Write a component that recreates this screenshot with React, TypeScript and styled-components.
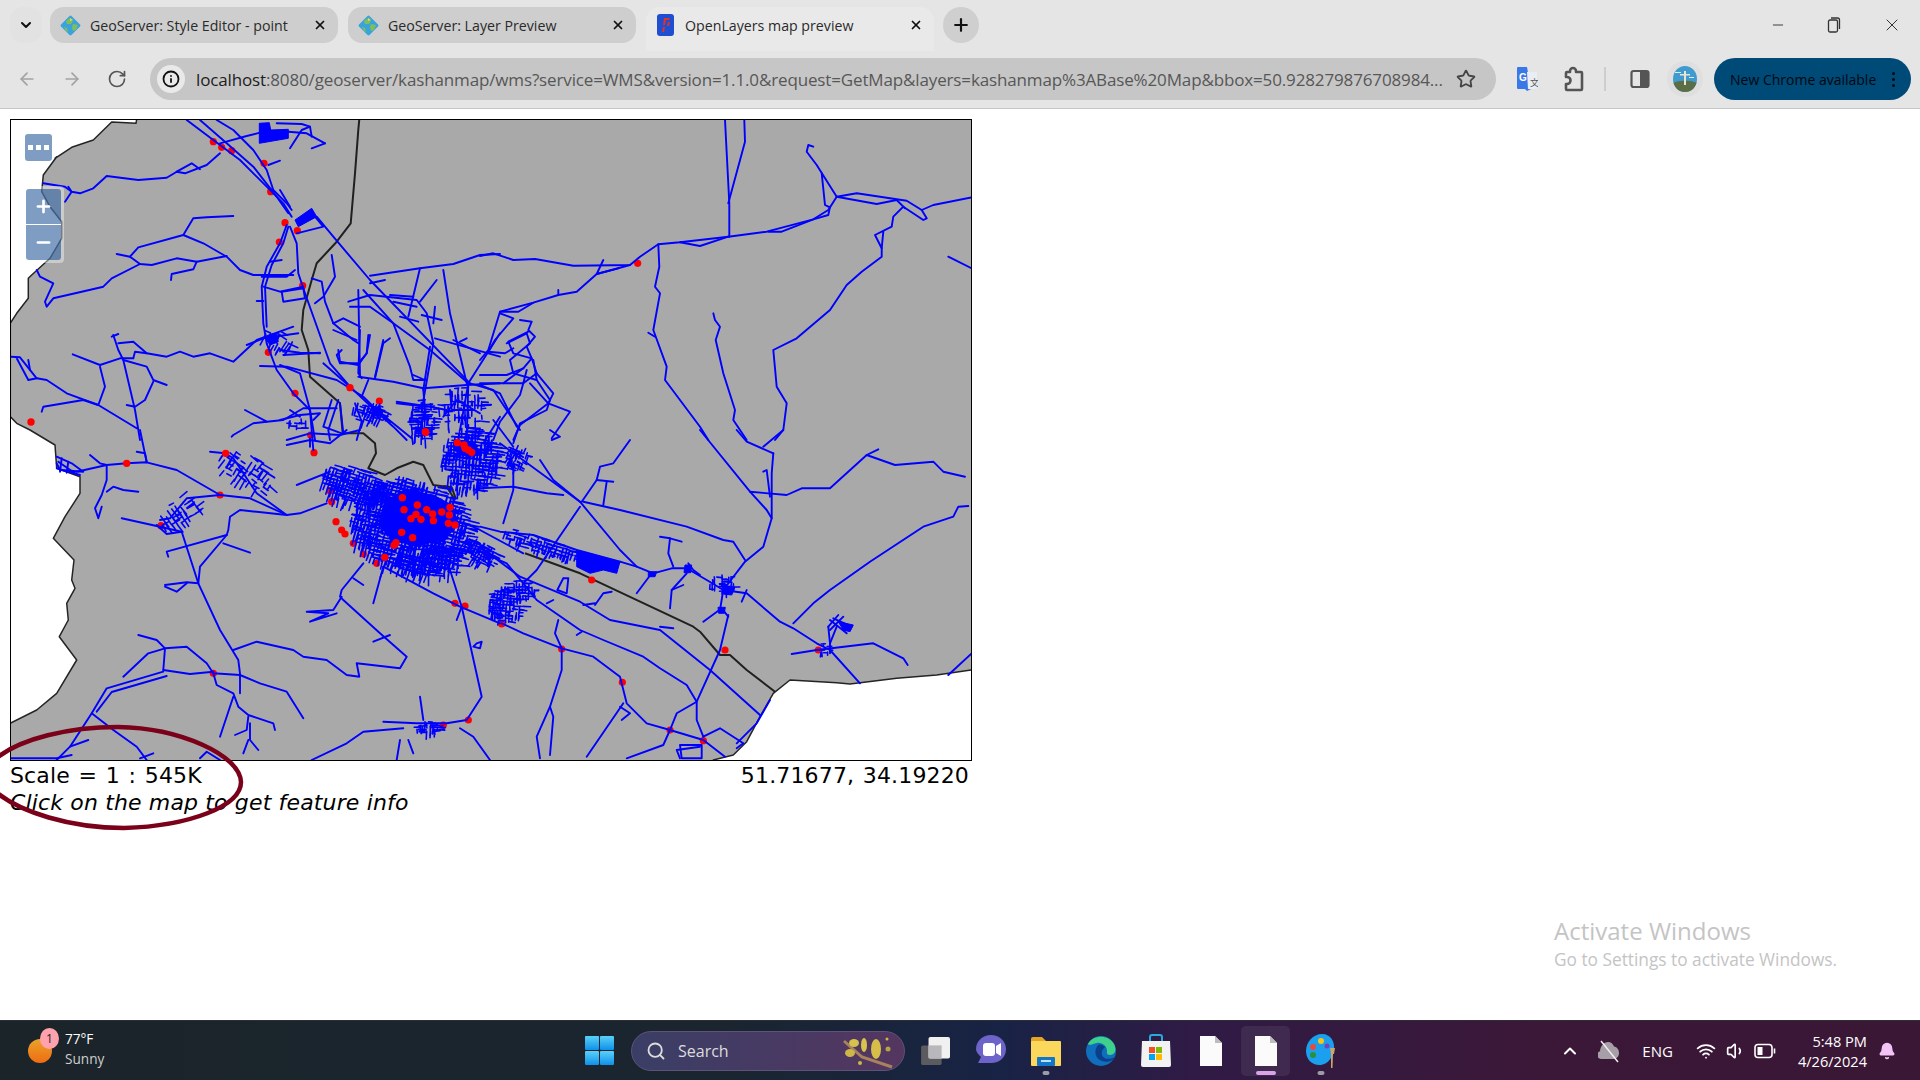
import React from 'react';
import styled, { createGlobalStyle } from 'styled-components';
import { ArrowLeft, ArrowRight, Bell, ChevronDown, ChevronUp, Info, Minus, Plus, RotateCw, Search, Star, Volume1, Wifi, X } from 'lucide-react';

const UI_FONT = `"Open Sans", "Noto Sans", sans-serif`;

const GlobalStyle = createGlobalStyle`
   html, body {
      margin: 0;
      padding: 0;
      width: 1920px;
      height: 1080px;
      overflow: hidden;
      background: #fff;
   }
   * { box-sizing: border-box; }
`;

/* map data: points are read off zoomed crops, so each list names the crop it came from */
type Crop = 'A' | 'B' | 'C' | 'D' | 'E' | 'F' | 'Z';
const ORIGIN: Record<Crop, [number, number]> = {
   A: [0, 110],
   B: [480, 110],
   C: [0, 430],
   D: [480, 430],
   E: [310, 400],
   F: [280, 330],
   Z: [10, 125],
};

const toScreen = (crop: Crop, pts: string) =>
   pts
      .trim()
      .split(/\s+/)
      .map((p) => {
         const [x, y] = p.split(',').map(Number);
         return `${(ORIGIN[crop][0] + x / 3).toFixed(1)},${(ORIGIN[crop][1] + y / 3).toFixed(1)}`;
      })
      .join(' ');

const LAND = [
   toScreen('A', '410,28 408,40 335,36 280,90 215,112 165,145'),
   toScreen('Z', '140,95 100,150 95,200 120,245 155,290 155,340 120,400 65,450'),
   toScreen('A', '85,505 85,565 50,610 31,640 31,920 50,940 90,960'),
   toScreen('C', '165,45 170,115 240,140 240,190 195,260 160,325 222,390 215,450 225,475 200,520 205,570 178,620 230,690 170,790 110,840 20,885 20,1000'),
   toScreen('D', '700,1000 700,990 760,975 800,935 840,860 880,790 930,750 1070,758 1110,762 1250,745 1370,735 1490,718'),
   toScreen('B', '1490,10'),
   toScreen('A', '410,10'),
].join(' ');

const BORDER_LINES: [Crop, string][] = [
   ['A', '1078,28 1075,60 1065,190 1052,340 1010,395 950,460 935,510 910,600 905,660 925,720 930,800 1020,880 1028,970'],
   ['C', '1028,10 1090,10 1125,40 1128,70 1105,115 1155,135 1190,115 1240,95 1270,105 1300,165 1340,170 1365,210'],
   ['E', '400,258 425,262 437,295'],
   ['D', '135,370 300,430 640,590 660,605 720,675 750,675 800,720 885,785'],
];

const ROADS: [Crop, string][] = [
   ['A', '560,30 640,90 720,150 800,230 850,280 875,320'],
   ['A', '650,30 700,60 760,120 800,180 820,240 860,280 875,300'],
   ['A', '600,30 680,100 760,170 830,260 865,310'],
   ['A', '660,100 740,78 780,68'],
   ['A', '865,65 920,70 975,100'],
   ['A', '870,115 905,60 930,50 935,80'],
   ['A', '830,40 905,42 930,50'],
   ['A', '935,115 975,100'],
   ['A', '805,165 840,152'],
   ['A', '660,130 620,165 555,190 530,185 500,203 415,210 320,198 280,235 240,250 215,245 195,230 130,220'],
   ['A', '530,185 575,160 600,178'],
   ['A', '195,275 215,245 205,230'],
   ['A', '840,240 870,290'],
   ['A', '700,318 620,322 580,325 550,375 415,412 390,440 350,432'],
   ['A', '550,375 610,400 680,440 720,480 760,495 880,495'],
   ['A', '680,438 590,455 530,445 455,465 420,462 390,440'],
   ['A', '420,462 335,505 310,530 245,545 160,565 140,590 135,575 160,520 120,500 110,480'],
   ['A', '590,455 580,478 515,492 513,510'],
   ['A', '860,345 840,400 800,470 785,530 790,640 800,700 830,780 880,850 930,900 945,990'],
   ['A', '865,350 850,400 815,465 795,530 800,650'],
   ['A', '870,350 890,400 895,490 915,550 990,760 1050,830'],
   ['A', '785,500 860,500 885,480'],
   ['A', '845,450 810,455'],
   ['A', '790,530 840,545 910,530'],
   ['A', '845,545 910,535 915,565 850,575 845,545'],
   ['A', '770,573 790,573'],
   ['A', '890,370 970,350 945,320'],
   ['A', '950,320 1000,380 1110,510 1410,820'],
   ['A', '1330,480 1350,610 1400,820'],
   ['A', '1260,475 1225,620'],
   ['A', '1310,510 1260,575'],
   ['A', '1110,497 1260,475 1360,462 1440,435 1500,432'],
   ['A', '1110,520 1155,510'],
   ['A', '995,435 1005,500 970,560 945,580'],
   ['A', '935,505 965,515 975,575 1000,640 1060,690 1075,700'],
   ['A', '1000,640 1030,625 1080,650'],
   ['A', '1105,675 1100,730 1075,765 1020,755 1015,720'],
   ['A', '1075,540 1080,800'],
   ['A', '1150,690 1125,800'],
   ['A', '1075,800 1180,815 1270,835 1400,825 1500,820'],
   ['A', '1045,575 1110,555 1250,570 1280,610 1300,700 1265,900'],
   ['A', '1050,590 1110,590 1180,640 1290,720 1405,820'],
   ['A', '1090,540 1180,640 1230,770 1240,810 1275,810'],
   ['A', '1170,555 1240,560'],
   ['A', '1180,575 1250,590'],
   ['A', '1200,620 1255,635'],
   ['A', '1265,615 1325,630'],
   ['A', '1305,590 1300,640'],
   ['A', '1305,685 1500,740'],
   ['A', '1405,820 1500,670'],
   ['A', '1405,820 1400,990'],
   ['A', '1380,695 1400,685'],
   ['A', '340,675 355,720 370,750 405,900 420,990'],
   ['A', '335,680 355,672'],
   ['A', '355,700 400,695 440,730 500,740 540,725 580,740 630,730 700,755 770,690 880,650'],
   ['A', '218,733 300,765 360,745 400,745'],
   ['A', '400,745 405,725 440,730'],
   ['A', '300,770 315,830 295,885 250,870 130,890 125,905'],
   ['A', '370,750 440,770 460,810 500,825'],
   ['A', '460,815 435,870 405,890 380,885'],
   ['A', '33,740 60,742 110,805 85,810 50,745'],
   ['A', '110,805 140,810 200,850 295,885 410,955'],
   ['A', '85,750 90,780'],
   ['A', '780,768 860,770 1010,810 1090,860 1130,900 1235,985'],
   ['A', '970,760 1050,830 1130,905 1180,950 1220,990'],
   ['A', '735,900 800,935 850,930 910,895 1010,895'],
   ['A', '800,935 760,940 700,975 695,980'],
   ['A', '740,705 790,685 895,670'],
   ['A', '850,735 960,728'],
   ['A', '1105,810 1085,860'],
   ['A', '1015,870 985,960 990,990'],
   ['A', '1190,880 1280,890'],
   ['A', '1065,880 1085,935 1070,990'],
   ['F', '160,0 230,30'],
   ['F', '240,0 235,130 245,145'],
   ['F', '270,15 260,70 235,100 180,100 170,75 185,60'],
   ['F', '330,25 310,40 285,145'],
   ['F', '120,70 60,68 0,60'],
   ['F', '0,105 60,130 90,240 100,360'],
   ['F', '400,135 435,150'],
   ['F', '430,180 435,240 420,300'],
   ['F', '350,215 450,230 500,240'],
   ['F', '450,50 430,180'],
   ['F', '565,160 540,300'],
   ['F', '570,160 640,180 720,300'],
   ['F', '760,90 770,150 810,210 800,240 720,280 700,340'],
   ['F', '680,40 740,10 750,40 690,90 700,130 770,150'],
   ['F', '0,270 60,255 120,250 100,270'],
   ['F', '20,330 90,310 180,315 240,300'],
   ['F', '30,240 60,260'],
   ['F', '155,210 130,290 185,310'],
   ['F', '180,220 190,310'],
   ['F', '520,30 600,70'],
   ['F', '510,180 515,240 580,240'],
   ['F', '490,260 530,210 600,250'],
   ['F', '660,260 610,340'],
   ['F', '640,270 700,350'],
   ['B', '735,30 748,280 748,380'],
   ['B', '793,30 795,95 745,280'],
   ['B', '0,438 40,430 100,450 165,447 280,467 450,465 480,440 535,403 600,397 745,380 860,365 1000,328 1045,300 1070,260 1130,250 1280,272 1325,300 1340,325 1330,330 1270,290'],
   ['B', '1325,300 1360,285 1475,262'],
   ['B', '1070,260 1010,165 980,125 985,105 1000,110'],
   ['B', '1025,190 1035,285 1045,290'],
   ['B', '1070,260 1190,282 1250,270 1275,295'],
   ['B', '1270,290 1240,320 1235,350 1185,375 1205,415 1205,440 1145,485 1100,525 1050,600 950,685 880,720 890,830 920,880 910,960 885,990'],
   ['B', '1210,365 1205,415'],
   ['B', '865,365 905,365 1000,328 1045,315 1050,290'],
   ['B', '600,397 660,408 745,380'],
   ['B', '1405,440 1475,475'],
   ['B', '535,403 538,470 525,530 540,550 520,660 560,770 555,810 660,950 685,990'],
   ['B', '505,668 525,680'],
   ['B', '700,610 705,630 720,650 707,690 730,790 765,900 760,930 800,990'],
   ['B', '450,465 350,492 290,545 235,555 160,578 60,605 25,720 0,750'],
   ['B', '370,450 350,492 415,475'],
   ['B', '235,540 235,555'],
   ['B', '160,578 115,605 60,605'],
   ['B', '60,610 100,625 45,690 25,725'],
   ['B', '120,630 155,635 145,660 165,680 140,710 155,745 170,790 220,850 205,880 270,905 215,985'],
   ['B', '145,665 85,695 100,730 155,745 130,775 70,820'],
   ['B', '170,790 130,820 0,820'],
   ['B', '140,780 130,820 120,855 60,935 40,990'],
   ['B', '0,795 80,795 130,775'],
   ['B', '150,820 205,880 120,945 100,990'],
   ['B', '25,725 75,730 100,715'],
   ['B', '0,825 60,850 110,950'],
   ['C', '170,80 215,100 250,125 180,120 170,100'],
   ['C', '175,95 225,130'],
   ['C', '170,115 240,135'],
   ['C', '185,85 180,125'],
   ['C', '205,95 200,128'],
   ['C', '380,100 320,105 230,125'],
   ['C', '270,75 300,100 320,105 320,150 305,195 285,235 295,265 305,230'],
   ['C', '320,185 340,170 370,180 415,185'],
   ['C', '380,100 440,97 530,120 660,195 750,205 860,255 900,250 980,220'],
   ['C', '410,65 435,70 440,95'],
   ['C', '420,0 440,97'],
   ['C', '860,255 770,190 700,85 675,70 630,65'],
   ['C', '660,195 560,205 510,265 480,270'],
   ['C', '365,265 480,290 545,305 595,460 660,600 715,690 720,730 720,790'],
   ['C', '680,315 500,365 505,380'],
   ['C', '680,315 600,410 595,460'],
   ['C', '670,340 750,368'],
   ['C', '860,255 720,240 690,260 685,300 680,315'],
   ['C', '495,465 560,457 595,460'],
   ['C', '495,470 530,485 560,460'],
   ['C', '470,285 500,312 545,305'],
   ['C', '700,660 770,635 880,660 910,680 980,690 1040,735 1078,740 1070,700 1200,715 1220,680 1140,610 1030,510 1020,500 1025,480 1090,400'],
   ['C', '1025,500 1000,540 920,545 985,550 930,575 1010,550'],
   ['C', '1120,635 1170,615'],
   ['C', '1060,445 1090,465'],
   ['C', '1150,410 1120,520'],
   ['C', '1150,410 1300,490 1380,530 1500,580'],
   ['C', '1350,420 1385,530 1445,800 1400,870 1340,880 1250,880 1150,875'],
   ['C', '1385,530 1370,570'],
   ['C', '1260,800 1270,870'],
   ['C', '1210,895 1090,905 1040,940 935,990'],
   ['C', '1380,895 1420,920 1470,990'],
   ['C', '1200,930 1190,990'],
   ['C', '1225,930 1240,970'],
   ['C', '1430,640 1445,635 1440,655 1420,650 1430,640'],
   ['C', '415,615 470,630 495,655 490,720'],
   ['C', '370,740 445,670 495,655 560,650 620,700 640,730 720,735 780,760 860,785 910,865'],
   ['C', '490,720 570,732 640,725'],
   ['C', '490,725 320,775 275,850 210,950 170,990'],
   ['C', '500,738 335,786 290,845'],
   ['C', '275,850 340,900 410,950 440,990'],
   ['C', '640,730 650,765 700,790 715,830 745,855 820,880 825,900'],
   ['C', '700,800 660,920'],
   ['C', '745,860 740,900 705,915'],
   ['C', '750,880 750,930 775,960'],
   ['C', '745,930 730,970'],
   ['C', '30,985 100,985 170,985 215,975'],
   ['C', '210,950 265,930'],
   ['C', '420,985 460,970'],
   ['C', '600,985 620,965 660,990'],
   ['C', '890,165 990,125'],
   ['C', '860,45 930,30 990,40 1040,0'],
   ['C', '930,25 930,50'],
   ['D', '0,290 60,305 160,315 290,360 420,395'],
   ['D', '0,300 130,370'],
   ['D', '420,395 470,410 520,430 575,415 620,415 680,450 730,480 800,490 900,575 940,595 1010,640 1050,660 1140,760'],
   ['D', '730,480 795,395 850,350 875,265 860,240 810,185 660,0'],
   ['D', '810,185 920,195 965,175 1050,175 1160,75 1195,58'],
   ['D', '1160,75 1245,105 1360,95 1390,125 1455,140'],
   ['D', '880,70 875,130 875,265'],
   ['D', '850,125 860,120 870,200'],
   ['D', '770,0 800,35 880,70'],
   ['D', '850,50 910,0'],
   ['D', '940,580 1000,520 1050,480 1170,395 1330,290 1420,260 1435,230 1465,228'],
   ['D', '935,672 1010,660 1180,640 1270,685 1283,705'],
   ['D', '1045,590 1050,640 1050,670'],
   ['D', '1070,590 1050,640'],
   ['D', '1405,735 1475,670'],
   ['D', '310,215 420,240 620,290 730,330 760,335 795,390'],
   ['D', '300,230 170,420 130,460'],
   ['D', '450,30 400,100 360,110 350,150 305,215'],
   ['D', '350,150 400,155'],
   ['D', '380,155 370,225'],
   ['D', '60,40 300,215 420,360 470,410'],
   ['D', '180,90 220,150 300,215'],
   ['D', '100,170 200,190 250,195'],
   ['D', '100,100 100,180 70,280'],
   ['D', '0,175 100,170'],
   ['D', '0,350 120,440 300,515 390,570 540,600 690,720 840,855'],
   ['D', '540,590 580,595'],
   ['D', '310,525 345,520'],
   ['D', '345,525 370,490 395,485'],
   ['D', '65,580 130,610 245,655 340,680 420,740 440,820 500,880 570,900 670,930 735,980'],
   ['D', '245,655 245,720 210,830 170,920 180,985'],
   ['D', '210,830 220,860 210,975'],
   ['D', '430,820 320,980'],
   ['D', '420,830 450,850 425,870'],
   ['D', '130,460 170,510 300,600 370,630 490,680 540,715 620,765 650,815 590,850 570,900 550,945 440,985'],
   ['D', '235,570 225,610 245,655'],
   ['D', '290,615 305,605'],
   ['D', '200,520 220,510'],
   ['D', '745,555 720,660 650,815 650,870 670,920'],
   ['D', '670,575 725,535 745,560'],
   ['D', '730,480 720,540'],
   ['D', '670,920 720,895 790,940 770,955'],
   ['D', '770,940 830,880 870,810'],
   ['D', '660,950 590,960 600,985'],
   ['D', '600,945 665,945 665,985 605,985 600,945'],
   ['D', '540,320 570,325 605,335'],
   ['D', '570,325 565,370 580,410'],
   ['D', '515,430 470,490'],
   ['D', '620,430 575,480 570,535'],
   ['D', '575,480 610,465'],
   ['D', '625,400 640,420 660,435'],
   ['D', '250,445 232,480 260,490 265,445 250,445'],
   ['D', '800,480 785,515'],
   ['D', '0,365 80,400 130,460'],
   ['D', '210,0 240,20 215,30'],
   ['D', '1050,600 1090,560'],
   ['D', '1050,570 1100,610'],
   ['D', '1060,565 1115,590'],
   ['D', '1045,590 1075,555'],
];

const BLOBS: [Crop, string][] = [
   ['A', '778,40 808,38 812,60 865,58 865,85 778,100'],
   ['A', '885,330 935,295 950,320 895,350'],
   ['A', '795,682 830,672 835,695 810,705'],
   ['A', '1115,895 1140,888 1145,910 1120,918'],
   ['D', '290,360 420,395 410,430 370,420 330,430 290,410'],
   ['D', '505,425 530,425 525,440 505,440'],
   ['D', '615,405 635,405 632,428 612,428'],
   ['D', '725,465 765,472 755,495 730,492'],
   ['D', '714,532 736,532 733,550 716,550'],
   ['D', '1075,575 1120,585 1110,605 1090,600'],
   ['E', '225,300 290,272 370,285 425,315 445,370 405,420 330,432 255,425 205,375'],
   ['E', '440,120 490,125 515,165 470,170 430,150'],
];

// small street grids: a seeded generator keeps the picture the same on every run
const mulberry = (seed: number) => () => {
   seed = (seed + 0x6d2b79f5) | 0;
   let t = Math.imul(seed ^ (seed >>> 15), 1 | seed);
   t = (t + Math.imul(t ^ (t >>> 7), 61 | t)) ^ t;
   return ((t ^ (t >>> 14)) >>> 0) / 4294967296;
};

type Cluster = { crop: Crop; cx: number; cy: number; rx: number; ry: number; n: number; len: number; tilt: number; step?: number };

const CLUSTERS: Cluster[] = [
   { crop: 'E', cx: 300, cy: 375, rx: 178, ry: 140, n: 1100, len: 30, tilt: 0.25, step: 11 },
   { crop: 'E', cx: 360, cy: 475, rx: 95, ry: 55, n: 170, len: 24, tilt: 0.1, step: 12 },
   { crop: 'E', cx: 130, cy: 255, rx: 100, ry: 52, n: 300, len: 26, tilt: 0.3, step: 10 },
   { crop: 'E', cx: 480, cy: 175, rx: 85, ry: 95, n: 420, len: 24, tilt: 0.1, step: 10 },
   { crop: 'E', cx: 335, cy: 65, rx: 42, ry: 52, n: 70, len: 22, tilt: 0, step: 10 },
   { crop: 'E', cx: 200, cy: 35, rx: 35, ry: 25, n: 50, len: 18, tilt: 0.4, step: 9 },
   { crop: 'E', cx: 510, cy: 455, rx: 55, ry: 32, n: 110, len: 18, tilt: 0.5, step: 9 },
   { crop: 'E', cx: 612, cy: 170, rx: 22, ry: 30, n: 24, len: 14, tilt: 0.5, step: 7 },
   { crop: 'E', cx: 620, cy: 570, rx: 55, ry: 25, n: 70, len: 16, tilt: 0, step: 9 },
   { crop: 'C', cx: 740, cy: 120, rx: 90, ry: 48, n: 70, len: 22, tilt: 0.6, step: 14 },
   { crop: 'C', cx: 540, cy: 250, rx: 65, ry: 38, n: 50, len: 20, tilt: -0.6, step: 13 },
   { crop: 'C', cx: 1485, cy: 525, rx: 20, ry: 38, n: 30, len: 14, tilt: 0, step: 8 },
   { crop: 'C', cx: 1280, cy: 893, rx: 45, ry: 18, n: 40, len: 16, tilt: 0, step: 6 },
   { crop: 'D', cx: 80, cy: 525, rx: 52, ry: 52, n: 120, len: 16, tilt: 0.1, step: 10 },
   { crop: 'D', cx: 180, cy: 345, rx: 115, ry: 24, n: 140, len: 16, tilt: 0.3, step: 10 },
   { crop: 'D', cx: 725, cy: 462, rx: 38, ry: 30, n: 40, len: 14, tilt: 0, step: 7 },
   { crop: 'D', cx: 110, cy: 80, rx: 35, ry: 42, n: 40, len: 14, tilt: 0.4, step: 8 },
   { crop: 'D', cx: 1030, cy: 655, rx: 20, ry: 14, n: 10, len: 10, tilt: 0, step: 6 },
   { crop: 'A', cx: 830, cy: 690, rx: 55, ry: 30, n: 20, len: 26, tilt: 0.5, step: 9 },
   { crop: 'A', cx: 1265, cy: 925, rx: 40, ry: 60, n: 45, len: 20, tilt: 0, step: 9 },
   { crop: 'A', cx: 1385, cy: 895, rx: 70, ry: 65, n: 75, len: 22, tilt: 0, step: 10 },
   { crop: 'A', cx: 1090, cy: 910, rx: 40, ry: 30, n: 26, len: 16, tilt: 0.3, step: 8 },
   { crop: 'A', cx: 890, cy: 940, rx: 28, ry: 20, n: 14, len: 14, tilt: 0, step: 7 },
];

const clusterPath = ({ crop, cx, cy, rx, ry, n, len, tilt, step = 12 }: Cluster, seed: number) => {
   const rnd = mulberry(seed + 11);
   const [ox, oy] = ORIGIN[crop];
   let d = '';
   for (let i = 0; i < n; i += 1) {
      const a = rnd() * Math.PI * 2;
      const r = Math.sqrt(rnd());
      const gx = Math.round((r * Math.cos(a) * rx) / step) * step;
      const gy = Math.round((r * Math.sin(a) * ry) / step) * step;
      const l = len * (0.5 + rnd());
      const ang = tilt + (rnd() > 0.5 ? 0 : Math.PI / 2) + (rnd() - 0.5) * 0.25;
      const x1 = cx + gx * Math.cos(tilt) - gy * Math.sin(tilt) + (rnd() - 0.5) * 3;
      const y1 = cy + gx * Math.sin(tilt) + gy * Math.cos(tilt) + (rnd() - 0.5) * 3;
      const x2 = x1 + l * Math.cos(ang);
      const y2 = y1 + l * Math.sin(ang);
      d += `M${(ox + x1 / 3).toFixed(1)} ${(oy + y1 / 3).toFixed(1)}L${(ox + x2 / 3).toFixed(1)} ${(oy + y2 / 3).toFixed(1)}`;
   }
   return d;
};

const DOTS_UNDER: [Crop, number, number][] = [
   ['A', 640, 95], ['A', 665, 112], ['A', 695, 122], ['A', 792, 160], ['A', 812, 245], ['A', 855, 338], ['A', 892, 362],
   ['A', 838, 396], ['A', 908, 527], ['A', 805, 727], ['A', 885, 850], ['A', 1138, 873], ['A', 932, 975],
   ['B', 473, 460], ['C', 660, 195], ['C', 483, 287], ['C', 640, 730], ['C', 1330, 885], ['C', 1405, 870], ['C', 1365, 520], ['C', 1395, 528],
   ['D', 65, 582], ['D', 245, 657], ['D', 427, 757], ['D', 570, 900], ['D', 670, 932], ['D', 735, 660], ['D', 335, 450], ['D', 1015, 660], ['D', 20, 375],
   ['E', 12, 158], ['E', 78, 365], ['E', 95, 390], ['E', 105, 402], ['E', 130, 430], ['E', 160, 462], ['E', 200, 490], ['E', 60, 272], ['E', 65, 305], ['E', 530, 460],
];

const DOTS_OVER: [Crop, number, number][] = [
   ['A', 93, 936], ['A', 1050, 833], ['A', 1276, 966], ['C', 380, 100], ['C', 677, 70],
   ['E', 277, 293], ['E', 282, 329], ['E', 322, 315], ['E', 350, 329], ['E', 318, 343], ['E', 303, 356], ['E', 333, 358], ['E', 368, 342],
   ['E', 370, 362], ['E', 395, 336], ['E', 420, 322], ['E', 418, 345], ['E', 415, 370], ['E', 435, 375], ['E', 275, 397], ['E', 308, 413],
   ['E', 252, 436], ['E', 258, 428], ['E', 224, 472], ['E', 347, 96], ['E', 442, 128], ['E', 462, 135], ['E', 465, 145], ['E', 475, 150], ['E', 485, 157],
];

const dotX = (c: Crop, x: number) => ORIGIN[c][0] + x / 3;
const dotY = (c: Crop, y: number) => ORIGIN[c][1] + y / 3;

/* chrome */
const Screen = styled.div`
   position: relative;
   width: 1920px;
   height: 1080px;
   display: flex;
   flex-direction: column;
   overflow: hidden;
   font-family: ${UI_FONT};
`;

const TabStrip = styled.div`
   height: 51px;
   background: #e5e5e5;
   display: flex;
   align-items: flex-start;
   padding: 7px 0 0 10px;
`;

const TabListButton = styled.div`
   width: 32px;
   height: 36px;
   margin-right: 8px;
   border-radius: 14px;
   background: #e2e2e2;
   display: flex;
   align-items: center;
   justify-content: center;
   color: #111;
`;

const Tab = styled.div<{ $active?: boolean }>`
   width: 288px;
   height: ${(p) => (p.$active ? '44px' : '36px')};
   margin-right: 10px;
   padding: ${(p) => (p.$active ? '0 11px 8px 11px' : '0 11px 0 10px')};
   border-radius: 14px 14px ${(p) => (p.$active ? '0 0' : '14px 14px')};
   background: ${(p) => (p.$active ? '#e9e9e9' : '#cecece')};
   display: flex;
   align-items: center;
   gap: ${(p) => (p.$active ? '11px' : '9px')};
   font-size: 14.2px;
   color: #2a2a2a;
   white-space: nowrap;
`;

const TabTitle = styled.span`
   flex: 1;
   overflow: hidden;
`;

const NewTabButton = styled.div`
   width: 36px;
   height: 36px;
   margin-left: -1px;
   border-radius: 50%;
   background: #cfcfcf;
   display: flex;
   align-items: center;
   justify-content: center;
   color: #111;
`;

const WindowButtons = styled.div`
   margin-left: auto;
   width: 166px;
   height: 36px;
   display: flex;
   align-items: center;
   justify-content: space-between;
   padding: 0 18px 0 16px;
   color: #333;
`;

const Toolbar = styled.div`
   height: 58px;
   background: #e5e5e5;
   border-bottom: 1px solid #c6c6c6;
   display: flex;
   align-items: center;
   padding: 0 9px 1px 17px;
`;

const NavButton = styled.div<{ $off?: boolean }>`
   width: 20px;
   margin-right: 25px;
   display: flex;
   color: ${(p) => (p.$off ? '#a2a2a2' : '#555')};
`;

const Omnibox = styled.div`
   width: 1346px;
   height: 42px;
   margin-left: -2px;
   border-radius: 21px;
   background: #c6c6c6;
   display: flex;
   align-items: center;
   padding: 0 20px 0 7px;
`;

const InfoBadge = styled.div`
   width: 28px;
   height: 28px;
   margin-right: 11px;
   border-radius: 50%;
   background: #e9e9e9;
   display: flex;
   align-items: center;
   justify-content: center;
   color: #111;
`;

const UrlText = styled.div`
   flex: 1;
   font-size: 17px;
   letter-spacing: -0.14px;
   white-space: nowrap;
   color: #575757;
   overflow: hidden;
`;

const UrlHost = styled.span`
   color: #1d1d1d;
`;

const ToolbarIcons = styled.div`
   display: flex;
   align-items: center;
   margin-left: 20px;
   flex: 1;
`;

const ToolbarIcon = styled.div<{ $gap?: number }>`
   display: flex;
   margin-right: ${(p) => p.$gap ?? 0}px;
   color: #555;
`;

const Divider = styled.div`
   width: 2px;
   height: 24px;
   background: #cdcdcd;
   margin-right: 24px;
`;

const UpdatePill = styled.div`
   margin-left: auto;
   width: 197px;
   height: 42px;
   border-radius: 21px;
   background: #004a77;
   color: #00080f;
   font-size: 14px;
   display: flex;
   align-items: center;
   padding-left: 16px;
   white-space: nowrap;
   justify-content: space-between;
   padding-right: 16px;
`;

const PillDots = styled.div`
   display: flex;
   flex-direction: column;
   gap: 3px;
   & > i {
      width: 3px;
      height: 3px;
      border-radius: 50%;
      background: #00080f;
   }
`;

/* page */
const Page = styled.div`
   flex: 1;
   background: #fff;
   padding: 10px 0 0 10px;
   position: relative;
`;

const MapFrame = styled.div`
   position: relative;
   width: 962px;
   height: 642px;
   border: 1px solid #000;
   background: #fff;
   overflow: hidden;
`;

const MapCanvas = styled.svg`
   display: block;
   width: 960px;
   height: 640px;
   filter: blur(0.4px);
`;

const OverviewButton = styled.div`
   position: absolute;
   left: 14px;
   top: 14px;
   width: 27px;
   height: 27px;
   border-radius: 3px;
   background: rgba(0, 60, 136, 0.5);
   display: flex;
   align-items: center;
   justify-content: center;
   gap: 3px;
   & > i {
      width: 5px;
      height: 5px;
      background: #fff;
   }
`;

const ZoomControl = styled.div`
   position: absolute;
   left: 12px;
   top: 66px;
   width: 41px;
   height: 77px;
   padding: 3px;
   border-radius: 4px;
   background: rgba(255, 255, 255, 0.4);
   display: flex;
   flex-direction: column;
   gap: 1px;
`;

const ZoomButton = styled.div<{ $top?: boolean }>`
   flex: 1;
   background: rgba(0, 60, 136, 0.5);
   border-radius: ${(p) => (p.$top ? '3px 3px 0 0' : '0 0 3px 3px')};
   display: flex;
   align-items: center;
   justify-content: center;
   color: #fff;
`;

const InfoRow = styled.div`
   width: 962px;
   height: 28px;
   padding-top: 1px;
   display: flex;
   justify-content: space-between;
   align-items: center;
   padding-right: 3px;
   font-family: "DejaVu Sans", Verdana, sans-serif;
   font-size: 22px;
   letter-spacing: 0.15px;
   word-spacing: 1.5px;
   color: #000;
`;

const FeatureHint = styled.div`
   font-family: "DejaVu Sans", Verdana, sans-serif;
   font-size: 22px;
   letter-spacing: 0.15px;
   font-style: italic;
   line-height: 28px;
   color: #000;
`;

const HandCircle = styled.svg`
   position: absolute;
   left: 0;
   top: 0;
   width: 260px;
   height: 840px;
   pointer-events: none;
`;

const Watermark = styled.div`
   position: absolute;
   left: 1554px;
   top: 805px;
   color: #c4c4c4;
   font-size: 17.3px;
   line-height: 26px;
   white-space: nowrap;
`;

const WatermarkTitle = styled.div`
   font-size: 24px;
   line-height: 33px;
`;

/* taskbar */
const Taskbar = styled.div`
   height: 60px;
   background: linear-gradient(90deg, #1b2429 0%, #1a2530 38%, #182345 52%, #2f1b45 62%, #3b1738 80%, #3b1736 100%);
   border-top: 1px solid #2e2e38;
   display: flex;
   align-items: center;
   color: #fff;
`;

const Weather = styled.div`
   width: 585px;
   height: 100%;
   display: flex;
   align-items: center;
   padding-left: 28px;
   gap: 13px;
`;

const SunIcon = styled.div`
   position: relative;
   width: 24px;
   height: 24px;
   border-radius: 50%;
   background: linear-gradient(180deg, #e9a32c, #ef6c11);
`;

const SunBadge = styled.div`
   position: absolute;
   left: 12px;
   top: -11px;
   width: 19px;
   height: 21px;
   border-radius: 50%;
   background: #ffa2ad;
   color: #222;
   font-size: 12px;
   display: flex;
   align-items: center;
   justify-content: center;
`;

const WeatherText = styled.div`
   font-size: 13.6px;
   line-height: 20px;
   margin-top: -3px;
`;

const WeatherSub = styled.div`
   color: #cfcfcf;
`;

const TaskIcons = styled.div`
   display: flex;
   align-items: center;
   height: 100%;
`;

const SearchBox = styled.div`
   width: 274px;
   height: 40px;
   margin: 0 3px 0 17px;
   border-radius: 20px;
   border: 1px solid #5d5278;
   background: linear-gradient(90deg, #3a3e66, #54365f);
   display: flex;
   align-items: center;
   padding: 0 8px 0 14px;
   gap: 12px;
   color: #dcdcdc;
   font-size: 16px;
`;

const SearchLabel = styled.span`
   flex: 1;
`;

const AppSlot = styled.div<{ $active?: boolean }>`
   position: relative;
   width: 49px;
   height: 50px;
   margin: 0 3px;
   border-radius: 5px;
   display: flex;
   align-items: center;
   justify-content: center;
   background: ${(p) => (p.$active ? 'rgba(255,255,255,0.07)' : 'transparent')};
`;

const RunDot = styled.div<{ $active?: boolean }>`
   position: absolute;
   bottom: 1px;
   left: 50%;
   transform: translateX(-50%);
   width: ${(p) => (p.$active ? '20px' : '7px')};
   height: 4px;
   border-radius: 2px;
   background: ${(p) => (p.$active ? '#d9a3e6' : '#9c9ca4')};
`;

const Tray = styled.div`
   margin-left: auto;
   display: flex;
   align-items: center;
   color: #fff;
   font-size: 15px;
   padding-right: 24px;
`;

const TrayItem = styled.div<{ $gap?: number }>`
   display: flex;
   margin-right: ${(p) => p.$gap ?? 0}px;
`;

const Clock = styled.div`
   text-align: right;
   font-size: 14.6px;
   line-height: 20px;
   margin-right: 11px;
`;

const GeoIcon = () => (
   <svg width="21" height="21" viewBox="0 0 21 21">
      <path d="M9.5 1a1.500 1.500 0 0 1 2 0l8.500 8.500a1.500 1.500 0 0 1 0 2L11.500 20a1.500 1.500 0 0 1-2 0L1 11.500a1.500 1.500 0 0 1 0-2Z" fill="#3aa3dc" />
      <path d="M6 6l4-3 3 3-2 3H7zM13 9l5 1-2 5-3 1-1-4zM4 12l3 1 1 4-2-1z" fill="#7fbf5a" />
      <path d="M10 3l3 2-3 1z" fill="#e6d45c" />
   </svg>
);

const LayersIcon = () => (
   <svg width="17" height="22" viewBox="0 0 17 22">
      <rect width="17" height="22" rx="3" fill="#1f4fd0" />
      <path d="M7 4h6l-1 2H9l-1 5H6zM6 13h2l-1 5H5z" fill="#e0312a" />
      <path d="M11 8h2l-1 4h-2z" fill="#e0312a" />
   </svg>
);

const RestoreIcon = () => (
   <svg width="16" height="18" viewBox="0 0 16 18" fill="none" stroke="#333" strokeWidth="1.3">
      <rect x="2.5" y="4" width="9" height="12" rx="1.5" />
      <path d="M5 2h6.5A2 2 0 0 1 13.5 4v9" />
   </svg>
);

const TranslateIcon = () => (
   <svg width="22" height="26" viewBox="0 0 22 26">
      <path d="M2 1h9l4 22-4 2-2-2H2a1 1 0 0 1-1-1V2a1 1 0 0 1 1-1Z" fill="#3b78e7" />
      <path d="M11 6h10v17H12Z" fill="#e9eef5" />
      <text x="3" y="15" fontSize="10" fontWeight="700" fill="#fff" fontFamily="Liberation Sans, sans-serif">G</text>
      <text x="14" y="20" fontSize="9" fill="#555" fontFamily="Noto Sans CJK SC, sans-serif">文</text>
   </svg>
);

const ExtensionIcon = () => (
   <svg width="22" height="26" viewBox="0 0 22 26" fill="none" stroke="#555" strokeWidth="2.6" strokeLinejoin="round">
      <path d="M8 5a3 3 0 0 1 6 0v1h5a1 1 0 0 1 1 1v16a1 1 0 0 1-1 1H5a1 1 0 0 1-1-1v-5h1a3 3 0 0 0 0-7H4V7a1 1 0 0 1 1-1h3Z" />
   </svg>
);

const SidePanelIcon = () => (
   <svg width="20" height="20" viewBox="0 0 20 20">
      <rect x="1.5" y="2" width="17" height="16" rx="2" fill="none" stroke="#555" strokeWidth="2.2" />
      <rect x="10" y="2" width="8" height="16" fill="#555" />
   </svg>
);

const AvatarIcon = () => (
   <svg width="36" height="36" viewBox="0 0 36 36">
      <circle cx="18" cy="18" r="18" fill="#dfdfdf" />
      <ellipse cx="18" cy="18" rx="12" ry="13" fill="#3f9bcf" />
      <path d="M6.500 22c4-3 19-3 23 0-2 6-6 9-11.500 9S8.500 28 6.500 22Z" fill="#5c6e45" />
      <path d="M17 10h2v14h-2zM13 13h10v1.500H13z" fill="#e8e6d0" />
      <path d="M8 11h6v1H8zM22 16h5v1h-5z" fill="#ffffff" opacity="0.8" />
   </svg>
);

const WinLogo = () => (
   <svg width="29" height="29" viewBox="0 0 29 29">
      <defs>
         <linearGradient id="winTile" x1="0" y1="0" x2="0" y2="1">
            <stop offset="0" stopColor="#5ad1f8" />
            <stop offset="1" stopColor="#0f90ea" />
         </linearGradient>
      </defs>
      <rect width="14" height="14" rx="1" fill="url(#winTile)" />
      <rect x="15" width="14" height="14" rx="1" fill="url(#winTile)" />
      <rect y="15" width="14" height="14" rx="1" fill="url(#winTile)" />
      <rect x="15" y="15" width="14" height="14" rx="1" fill="url(#winTile)" />
   </svg>
);

const BranchDeco = () => (
   <svg width="56" height="36" viewBox="0 0 56 36">
      <path d="M4 8 22 24l30 10" stroke="#a9825d" strokeWidth="3" fill="none" />
      <ellipse cx="14" cy="10" rx="5" ry="4" fill="#d6c04e" />
      <ellipse cx="10" cy="20" rx="5" ry="4" fill="#cdb746" />
      <ellipse cx="24" cy="12" rx="3" ry="7" fill="#d9c24d" />
      <ellipse cx="36" cy="16" rx="5" ry="10" fill="#d6be48" />
      <circle cx="48" cy="16" r="2.500" fill="#b9a241" />
      <circle cx="20" cy="30" r="2" fill="#cdb746" />
      <circle cx="47" cy="6" r="1.500" fill="#cdb746" />
   </svg>
);

const TaskViewIcon = () => (
   <svg width="30" height="28" viewBox="0 0 32 30">
      <rect x="0" y="9" width="22" height="21" rx="2" fill="#5b5b60" />
      <rect x="8" y="0" width="23" height="23" rx="2" fill="#f0f0f0" />
      <rect x="8" y="9" width="14" height="14" fill="#b8b8bc" />
   </svg>
);

const MeetIcon = () => (
   <svg width="30" height="32" viewBox="0 0 30 32">
      <path d="M15 0c8 0 15 6 15 14s-6 14-15 14H2l3-6C2 19 0 17 0 14 0 6 7 0 15 0Z" fill="#6d63c8" />
      <rect x="7" y="8" width="12" height="13" rx="3" fill="#fff" />
      <path d="m20 11 5-3v13l-5-3z" fill="#fff" />
   </svg>
);

const ExplorerIcon = () => (
   <svg width="30" height="30" viewBox="0 0 30 30">
      <path d="M0 3a2 2 0 0 1 2-2h9l4 4h-1L0 7Z" fill="#e5a424" />
      <rect y="5" width="30" height="25" rx="1" fill="#fbd75b" />
      <rect x="6" y="21" width="18" height="9" rx="1" fill="#1277c8" />
      <rect x="10" y="24" width="10" height="2" fill="#bfe0f7" />
   </svg>
);

const EdgeIcon = () => (
   <svg width="30" height="30" viewBox="0 0 30 30">
      <circle cx="15" cy="15" r="15" fill="#0f6fbd" />
      <path d="M2 8c5-9 20-10 26 0 3 6 1 11-4 11-4 0-3-3-3-4 0-5-5-9-10-8C6 8 3 10 2 8Z" fill="#3fd18b" />
      <path d="M12 9c-4 5-4 13 4 16 5 2 11 0 13-4-5 3-15 3-13-6 1-2 2-3 3-4-3-3-6-3-7-2Z" fill="#0a3f8c" />
   </svg>
);

const StoreIcon = () => (
   <svg width="30" height="34" viewBox="0 0 30 34">
      <path d="M9 7V3a2 2 0 0 1 2-2h8a2 2 0 0 1 2 2v4" fill="none" stroke="#2aa9e0" strokeWidth="2" />
      <path d="M1 7h28l1 24a2 2 0 0 1-2 2H2a2 2 0 0 1-2-2Z" fill="#f2f2f2" />
      <rect x="8" y="13" width="6" height="6" fill="#f25022" />
      <rect x="15" y="13" width="6" height="6" fill="#7fba00" />
      <rect x="8" y="20" width="6" height="6" fill="#00a4ef" />
      <rect x="15" y="20" width="6" height="6" fill="#ffb900" />
   </svg>
);

const FileIcon = () => (
   <svg width="22" height="30" viewBox="0 0 22 30">
      <path d="M0 0h15l7 7v23H0Z" fill="#fbfbfb" />
      <path d="M15 0l7 7h-7Z" fill="#bdbdbd" />
   </svg>
);

const PaintIcon = () => (
   <svg width="30" height="34" viewBox="0 0 30 34">
      <path d="M16 0c9 0 13 8 12 16-1 7-6 14-13 15C7 32 0 26 0 17 0 8 7 0 16 0Z" fill="#1aa0ee" />
      <circle cx="15" cy="7" r="3" fill="#f5c518" />
      <circle cx="7" cy="13" r="3" fill="#e84a3a" />
      <circle cx="7" cy="21" r="3" fill="#2b8f3f" />
      <circle cx="21" cy="12" r="2.500" fill="#7a3fbf" />
      <path d="M24 14h5l-1 6h-3Zm1 6h2l-.500 14h-1.500Z" fill="#c9a56b" />
   </svg>
);

const MutedCloudIcon = () => (
   <svg width="22" height="24" viewBox="0 0 22 24">
      <path d="M3 20a4 4 0 0 1-1-7.800C2.500 7 6 3 10 3c3 0 5 2 6 4.500 3 .5 5 3 5 6.500 0 3.500-2.500 6-5.500 6Z" fill="#a79fa8" />
      <path d="M3 2 20 23" stroke="#f2eef2" strokeWidth="1.5" />
   </svg>
);

const BatteryIcon = () => (
   <svg width="22" height="16" viewBox="0 0 22 16" fill="none" stroke="#fff" strokeWidth="1.6">
      <rect x="1" y="1.500" width="17" height="13" rx="3" />
      <path d="M20.500 5.500v5" />
      <rect x="3.500" y="4" width="5" height="8" fill="#fff" stroke="none" />
   </svg>
);

const URL_HOST = 'localhost';
const URL_REST = ':8080/geoserver/kashanmap/wms?service=WMS&version=1.1.0&request=GetMap&layers=kashanmap%3ABase%20Map&bbox=50.928279876708984...';

function MapView() {
   return (
      <MapCanvas viewBox="11 120 960 640">
         <rect x="0" y="100" width="1000" height="700" fill="#fff" />
         <polygon points={LAND} fill="#a9a9a9" stroke="#242424" strokeWidth="1.5" strokeLinejoin="round" />
         {BORDER_LINES.map(([c, pts], i) => (
            <polyline key={i} points={toScreen(c, pts)} fill="none" stroke="#202020" strokeWidth="2" strokeLinejoin="round" />
         ))}
         {DOTS_UNDER.map(([c, x, y], i) => (
            <circle key={i} cx={dotX(c, x)} cy={dotY(c, y)} r="3.6" fill="#ff0000" />
         ))}
         <g fill="none" stroke="#0000ff" strokeWidth="1.9" strokeLinejoin="round" strokeLinecap="round">
            {ROADS.map(([c, pts], i) => (
               <polyline key={i} points={toScreen(c, pts)} />
            ))}
         </g>
         <g fill="none" stroke="#0000ff" strokeWidth="1.6" strokeLinecap="round">
            {CLUSTERS.map((cl, i) => (
               <path key={i} d={clusterPath(cl, i)} />
            ))}
         </g>
         {BLOBS.map(([c, pts], i) => (
            <polygon key={i} points={toScreen(c, pts)} fill="#0000ff" stroke="#0000ff" strokeWidth="1" />
         ))}
         {DOTS_OVER.map(([c, x, y], i) => (
            <circle key={i} cx={dotX(c, x)} cy={dotY(c, y)} r="3.7" fill="#ff0000" />
         ))}
      </MapCanvas>
   );
}

export default function App(): JSX.Element {
   return (
      <Screen>
         <GlobalStyle />
         <TabStrip>
            <TabListButton>
               <ChevronDown size={16} strokeWidth={3} />
            </TabListButton>
            <Tab>
               <GeoIcon />
               <TabTitle>GeoServer: Style Editor - point</TabTitle>
               <X size={14} strokeWidth={3} color="#111" />
            </Tab>
            <Tab>
               <GeoIcon />
               <TabTitle>GeoServer: Layer Preview</TabTitle>
               <X size={14} strokeWidth={3} color="#111" />
            </Tab>
            <Tab $active>
               <LayersIcon />
               <TabTitle>OpenLayers map preview</TabTitle>
               <X size={14} strokeWidth={3} color="#111" />
            </Tab>
            <NewTabButton>
               <Plus size={20} strokeWidth={2.6} />
            </NewTabButton>
            <WindowButtons>
               <Minus size={16} strokeWidth={1.4} />
               <RestoreIcon />
               <X size={20} strokeWidth={1.2} />
            </WindowButtons>
         </TabStrip>
         <Toolbar>
            <NavButton $off>
               <ArrowLeft size={20} />
            </NavButton>
            <NavButton $off>
               <ArrowRight size={20} />
            </NavButton>
            <NavButton>
               <RotateCw size={20} />
            </NavButton>
            <Omnibox>
               <InfoBadge>
                  <Info size={18} strokeWidth={2.4} />
               </InfoBadge>
               <UrlText>
                  <UrlHost>{URL_HOST}</UrlHost>
                  {URL_REST}
               </UrlText>
               <Star size={20} strokeWidth={2.2} color="#444" />
            </Omnibox>
            <ToolbarIcons>
               <ToolbarIcon $gap={24}>
                  <TranslateIcon />
               </ToolbarIcon>
               <ToolbarIcon $gap={20}>
                  <ExtensionIcon />
               </ToolbarIcon>
               <Divider />
               <ToolbarIcon $gap={17}>
                  <SidePanelIcon />
               </ToolbarIcon>
               <ToolbarIcon>
                  <AvatarIcon />
               </ToolbarIcon>
               <UpdatePill>
                  New Chrome available
                  <PillDots>
                     <i />
                     <i />
                     <i />
                  </PillDots>
               </UpdatePill>
            </ToolbarIcons>
         </Toolbar>
         <Page>
            <MapFrame>
               <MapView />
               <OverviewButton>
                  <i />
                  <i />
                  <i />
               </OverviewButton>
               <ZoomControl>
                  <ZoomButton $top>
                     <Plus size={19} strokeWidth={3.4} />
                  </ZoomButton>
                  <ZoomButton>
                     <Minus size={19} strokeWidth={3.4} />
                  </ZoomButton>
               </ZoomControl>
            </MapFrame>
            <InfoRow>
               <span>Scale = 1 : 545K</span>
               <span>51.71677, 34.19220</span>
            </InfoRow>
            <FeatureHint>Click on the map to get feature info</FeatureHint>
            <Watermark>
               <WatermarkTitle>Activate Windows</WatermarkTitle>
               Go to Settings to activate Windows.
            </Watermark>
         </Page>
         <HandCircle viewBox="0 0 260 840">
            <path
               d="M-6 760C20 738 70 727 118 727C180 728 240 755 241 782C241 806 190 826 124 828C70 828 20 812 -4 792"
               fill="none"
               stroke="#7b0019"
               strokeWidth="4.5"
            />
         </HandCircle>
         <Taskbar>
            <Weather>
               <SunIcon>
                  <SunBadge>1</SunBadge>
               </SunIcon>
               <WeatherText>
                  77°F
                  <WeatherSub>Sunny</WeatherSub>
               </WeatherText>
            </Weather>
            <TaskIcons>
               <WinLogo />
               <SearchBox>
                  <Search size={20} strokeWidth={2.2} />
                  <SearchLabel>Search</SearchLabel>
                  <BranchDeco />
               </SearchBox>
               <AppSlot>
                  <TaskViewIcon />
               </AppSlot>
               <AppSlot>
                  <MeetIcon />
               </AppSlot>
               <AppSlot>
                  <ExplorerIcon />
                  <RunDot />
               </AppSlot>
               <AppSlot>
                  <EdgeIcon />
               </AppSlot>
               <AppSlot>
                  <StoreIcon />
               </AppSlot>
               <AppSlot>
                  <FileIcon />
               </AppSlot>
               <AppSlot $active>
                  <FileIcon />
                  <RunDot $active />
               </AppSlot>
               <AppSlot>
                  <PaintIcon />
                  <RunDot />
               </AppSlot>
            </TaskIcons>
            <Tray>
               <TrayItem $gap={18}>
                  <ChevronUp size={20} strokeWidth={2.4} />
               </TrayItem>
               <TrayItem $gap={22}>
                  <MutedCloudIcon />
               </TrayItem>
               <TrayItem $gap={23}>ENG</TrayItem>
               <TrayItem $gap={10}>
                  <Wifi size={20} strokeWidth={2.2} />
               </TrayItem>
               <TrayItem $gap={8}>
                  <Volume1 size={20} />
               </TrayItem>
               <TrayItem $gap={22}>
                  <BatteryIcon />
               </TrayItem>
               <Clock>
                  5:48 PM
                  <br />
                  4/26/2024
               </Clock>
               <Bell size={18} fill="#f2c4f5" color="#f2c4f5" />
            </Tray>
         </Taskbar>
      </Screen>
   );
}
